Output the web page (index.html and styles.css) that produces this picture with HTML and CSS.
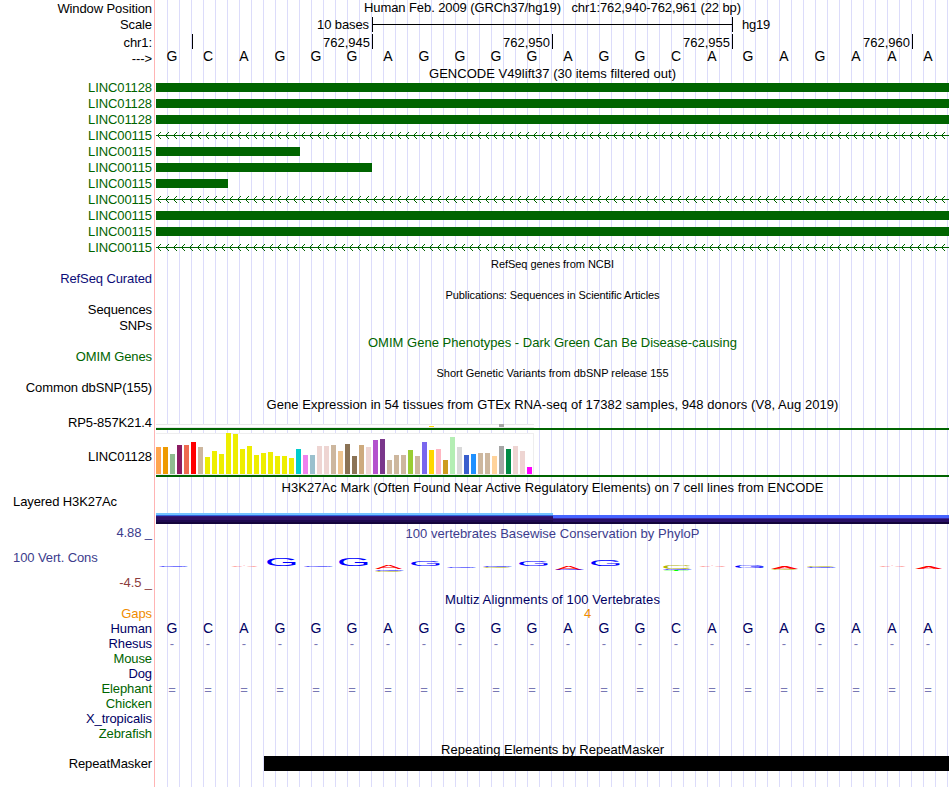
FILE: index.html
```html
<!DOCTYPE html>
<html lang="en">

<head>
    <meta charset="UTF-8">
    <meta name="viewport" content="width=device-width, initial-scale=1.0">
    <title>Genome Browser hg19 chr1:762,940-762,961</title>
    <link rel="stylesheet" href="styles.css">
</head>

<body>
    <main class="browser">
        <!-- position, scale and ruler -->
        <div class="row header-row">
            <div class="label">Window Position</div>
            <div class="data title position-title"><span data-w="377">Human Feb. 2009 (GRCh37/hg19) &nbsp; chr1:762,940-762,961 (22 bp)</span></div>
        </div>
        <div class="row header-row scale-row">
            <div class="label">Scale</div>
            <div class="data scale">
                <span class="scale-size" data-w="52">10 bases</span>
                <span class="scale-bar"></span>
                <span data-w="28">hg19</span>
            </div>
        </div>
        <div class="row ruler-row">
            <div class="label">chr1:</div>
            <div class="data ruler">
                <span class="tick tick-first"></span>
                <span class="tick">762,945</span>
                <span class="tick">762,950</span>
                <span class="tick">762,955</span>
                <span class="tick">762,960</span>
            </div>
        </div>
        <div class="row sequence-row">
            <div class="label arrow-label">---&gt;</div>
            <div class="data bases" data-seq="GCAGGGAGGGGAGGCAGAGAAA"></div>
        </div>

        <!-- GENCODE -->
        <div class="row gencode-title">
            <div class="data title"><span data-w="247">GENCODE V49lift37 (30 items filtered out)</span></div>
        </div>
        <div class="genes" id="genes"></div>

        <div class="row title-row small"><div class="data title"><span data-w="123">RefSeq genes from NCBI</span></div></div>
        <div class="row label-row refseq"><div class="label navy">RefSeq Curated</div></div>
        <div class="row title-row small"><div class="data title"><span data-w="214">Publications: Sequences in Scientific Articles</span></div></div>
        <div class="row label-row pubs"><div class="label">Sequences</div></div>
        <div class="row label-row snps"><div class="label">SNPs</div></div>
        <div class="row title-row omim-title"><div class="data title green"><span data-w="369">OMIM Gene Phenotypes - Dark Green Can Be Disease-causing</span></div></div>
        <div class="row label-row omim"><div class="label green">OMIM Genes</div></div>
        <div class="row title-row small dbsnp-title"><div class="data title"><span data-w="232">Short Genetic Variants from dbSNP release 155</span></div></div>
        <div class="row label-row dbsnp"><div class="label">Common dbSNP(155)</div></div>

        <!-- GTEx -->
        <div class="row title-row"><div class="data title"><span data-w="572">Gene Expression in 54 tissues from GTEx RNA-seq of 17382 samples, 948 donors (V8, Aug 2019)</span></div></div>
        <div class="row gtex-low">
            <div class="label">RP5-857K21.4</div>
            <div class="data gtex-track">
                <svg class="gtex-box" width="378" height="4" viewBox="0 0 378 4">
                    <path class="box-line" d="M0 .5H378M0 3.5H378" />
                    <rect x="273" y="2" width="5" height="1" fill="#ffd700" />
                    <rect x="343" y="0" width="5" height="3" fill="#a6a6a6" />
                </svg>
            </div>
        </div>
        <div class="row gtex-high">
            <div class="label">LINC01128</div>
            <div class="data gtex-track">
                <div class="gtex-bars" id="gtex"></div>
            </div>
        </div>

        <!-- H3K27Ac -->
        <div class="row title-row h3k-title"><div class="data title"><span data-w="542">H3K27Ac Mark (Often Found Near Active Regulatory Elements) on 7 cell lines from ENCODE</span></div></div>
        <div class="row h3k">
            <div class="label label-left">Layered H3K27Ac</div>
            <div class="data signal"><span class="signal-high"></span><span class="signal-low"></span></div>
        </div>

        <!-- conservation -->
        <div class="row phylop">
            <div class="label phylop-labels">
                <span class="blue">4.88 _</span>
                <span class="blue label-left">100 Vert. Cons</span>
                <span class="maroon">-4.5 _</span>
            </div>
            <div class="data">
                <div class="title blue"><span data-w="294">100 vertebrates Basewise Conservation by PhyloP</span></div>
                <svg id="logo" class="logo" width="793" height="30" viewBox="156 550 793 30"></svg>
            </div>
        </div>
        <div class="row title-row multiz-title"><div class="data title navy-dark"><span data-w="215">Multiz Alignments of 100 Vertebrates</span></div></div>
        <div class="row align-row gaps"><div class="label orange">Gaps</div><div class="data gap-count">4</div></div>
        <div class="row align-row"><div class="label navy-dark">Human</div><div class="data bases navy-dark" data-seq="GCAGGGAGGGGAGGCAGAGAAA"></div></div>
        <div class="row align-row"><div class="label navy-dark">Rhesus</div><div class="data bases faded" data-seq="----------------------"></div></div>
        <div class="row align-row"><div class="label green">Mouse</div></div>
        <div class="row align-row"><div class="label navy-dark">Dog</div></div>
        <div class="row align-row"><div class="label green">Elephant</div><div class="data bases faded equals" data-seq="======================"></div></div>
        <div class="row align-row"><div class="label green">Chicken</div></div>
        <div class="row align-row"><div class="label navy-dark">X_tropicalis</div></div>
        <div class="row align-row"><div class="label green">Zebrafish</div></div>

        <!-- repeats -->
        <div class="row title-row repeat-title"><div class="data title"><span data-w="223">Repeating Elements by RepeatMasker</span></div></div>
        <div class="row repeats">
            <div class="label">RepeatMasker</div>
            <div class="data"><div class="repeat-bar"></div></div>
        </div>
    </main>
    <script src="script.js"></script>
</body>

</html>
```
FILE: styles.css
```css
* {
    box-sizing: border-box;
    margin: 0;
    padding: 0;
}

body {
    background-color: #fff;
    color: #000;
    font-family: "Liberation Sans", Arial, Helvetica, sans-serif;
    font-size: 13px;
    line-height: 16px;
}

.browser {
    width: 950px;
    height: 787px;
    overflow: hidden;
    /* red divider, then a guide line every third of a base */
    background:
        linear-gradient(#ffb4b4, #ffb4b4) 154px 0 / 1px 100% no-repeat,
        repeating-linear-gradient(to right, #dcdcfa 0, #dcdcfa 1px, transparent 1px, transparent 12px) 167px 0 / 783px 100% no-repeat;
}

.row {
    display: grid;
    grid-template-columns: 152px 793px;
    grid-template-rows: minmax(0, 1fr);
    column-gap: 4px;
}

.label {
    grid-column: 1;
    text-align: right;
    white-space: nowrap;
    letter-spacing: -0.1px;
}

.label-left {
    text-align: left;
    padding-left: 13px;
}

.data {
    grid-column: 2;
    white-space: nowrap;
}

.title {
    text-align: center;
}

.green { color: #006400; }
.navy { color: #0c0c78; }
.navy-dark { color: #000064; }
.blue { color: #3c3c8c; }
.maroon { color: #8c3c3c; }
.orange { color: #f08c00; }

/* header */
.header-row {
    height: 17px;
    line-height: 17px;
}

.scale-row {
    line-height: 15px;
}

.position-title {
    line-height: 15px;
}

.scale {
    display: flex;
}

.scale-size {
    width: 213px;
    text-align: right;
}

.scale-bar {
    width: 361px;
    height: 15px;
    margin: 0 9px 0 3px;
    border: solid #000;
    border-width: 0 1px;
    background: linear-gradient(#000, #000) 0 7px / 100% 1px no-repeat;
}

.ruler-row {
    height: 16px;
    line-height: 17px;
}

.ruler {
    display: flex;
}

.tick {
    width: 180px;
    height: 15px;
    padding-right: 2px;
    border-right: 1px solid #000;
    text-align: right;
}

.tick-first {
    width: 37px;
}

.sequence-row {
    height: 16px;
    line-height: 13px;
}

.arrow-label {
    line-height: 17px;
}

.bases {
    display: grid;
    grid-template-columns: repeat(22, 36px);
    text-align: center;
    font-size: 14px;
    margin-left: -2px;
}

/* gene items */
.gencode-title {
    height: 14px;
    line-height: 15px;
}

.gene {
    height: 16px;
    color: #006400;
}

.exon {
    height: 9px;
    margin-top: 3px;
    background-color: #006400;
}

.intron {
    display: block;
    margin-top: 4px;
}

/* titles and dense labels */
.title-row {
    height: 16px;
}

.small {
    height: 18px;
    font-size: 11px;
    line-height: 17px;
}

.label-row {
    height: 13px;
    line-height: 10px;
}

.pubs {
    height: 14px;
}

.snps {
    height: 17px;
    line-height: 13px;
}

.omim-title {
    line-height: 14px;
}

.omim {
    height: 15px;
    line-height: 10px;
}

.dbsnp-title {
    height: 14px;
    line-height: 13px;
}

.dbsnp {
    height: 16px;
    line-height: 14px;
}

/* expression */
.gtex-low {
    height: 17px;
    line-height: 19px;
}

.gtex-track {
    display: flex;
    flex-direction: column;
    justify-content: flex-end;
    border-bottom: 2px solid #006400;
}

.gtex-box {
    display: block;
    background-color: #fff;
}

.box-line {
    stroke: #e8e8e8;
    fill: none;
}

.gtex-high {
    height: 47px;
    line-height: 53px;
}

.gtex-bars {
    display: flex;
    align-items: flex-end;
    gap: 2px;
    width: 378px;
    height: 42px;
    background-color: #fff;
    border: solid #eee;
    border-width: 1px 1px 1px 0;
}

.gtex-bars i {
    width: 5px;
    flex: none;
}

/* histone marks */
.h3k-title {
    height: 18px;
    line-height: 21px;
}

.h3k {
    height: 29px;
    line-height: 14px;
}

.signal {
    display: flex;
    align-items: flex-end;
}

.signal-high {
    width: 397px;
    height: 11px;
    background: linear-gradient(#73c3ff 0 2px, #3264dc 2px 3px, #321478 3px 4px, #2d0f64 4px 7px, #1e0a50 7px 9px, #14053c 9px);
}

.signal-low {
    flex: 1;
    height: 9px;
    background: linear-gradient(#4664ff 0 3px, #3c28a0 3px 4px, #280f64 4px 7px, #14053c 7px);
}

/* conservation */
.phylop {
    height: 68px;
}

.phylop .title {
    height: 26px;
    line-height: 20px;
}

.phylop-labels {
    display: flex;
    flex-direction: column;
    justify-content: space-between;
    height: 67px;
    padding-top: 1px;
}

.logo {
    display: block;
    font-size: 40px;
}

.multiz-title {
    height: 15px;
}

.align-row {
    height: 15px;
    line-height: 15px;
}

.gaps {
    height: 14px;
    line-height: 14px;
}

.gap-count {
    padding-left: 428px;
    color: #f08c00;
}

.faded {
    color: #7878b4;
    font-size: 13px;
}

.equals {
    line-height: 17px;
}

.repeat-title {
    height: 15px;
    line-height: 17px;
}

.repeats {
    height: 16px;
}

.repeat-bar {
    height: 15px;
    margin-left: 108px;
    background-color: #000;
}
```
FILE: script.js
```js
// bases, one cell each
document.querySelectorAll('.bases').forEach((row) => {
    row.innerHTML = row.dataset.seq.split('').map(b => `<span>${b}</span>`).join('');
});

// gene items: width of the exon, 0 for an intron
const genes = [
    ['LINC01128', 793], ['LINC01128', 793], ['LINC01128', 793],
    ['LINC00115', 0], ['LINC00115', 144], ['LINC00115', 216], ['LINC00115', 72],
    ['LINC00115', 0], ['LINC00115', 793], ['LINC00115', 793], ['LINC00115', 0]
];

function intron() {
    let d = 'M0 3h793v1H0z';
    // arrow heads, one pixel per step away from the line
    for (let x = 1; x < 790; x += 8) {
        for (let i = 1; i <= 3; i++) {
            d += `M${x + i} ${3 - i}h1v1h-1zM${x + i} ${3 + i}h1v1h-1z`;
        }
    }
    return `<svg class="intron" width="793" height="7"><path d="${d}" fill="#006400" shape-rendering="crispEdges"/></svg>`;
}

document.getElementById('genes').innerHTML = genes.map(([name, width]) => `
    <div class="row gene">
        <div class="label">${name}</div>
        <div class="data">${width ? `<div class="exon" style="width: ${width}px"></div>` : intron()}</div>
    </div>`).join('');

// expression per tissue
const tissues = [
    [27, '#ffa54f'], [27, '#ee9a00'], [20, '#8fbc8f'], [29, '#8b1c62'], [29, '#ee6a50'], [32, '#ff0000'],
    [27, '#cdb79e'], [17, '#eeee00'], [23, '#eeee00'], [20, '#eeee00'], [41, '#eeee00'], [40, '#eeee00'],
    [25, '#eeee00'], [28, '#eeee00'], [19, '#eeee00'], [21, '#eeee00'], [22, '#eeee00'], [18, '#eeee00'],
    [18, '#eeee00'], [16, '#eeee00'], [25, '#00cdcd'], [19, '#ee82ee'], [19, '#9ac0cd'], [28, '#eed5d2'],
    [28, '#eed5d2'], [29, '#cdb79e'], [23, '#eec591'], [30, '#8b7355'], [18, '#8b7355'], [29, '#cdaa7d'],
    [27, '#eed5d2'], [34, '#b452cd'], [35, '#7a378b'], [14, '#cdb79e'], [19, '#cdb79e'], [19, '#cdb79e'],
    [24, '#9acd32'], [18, '#cdb79e'], [32, '#7a67ee'], [24, '#ffd700'], [25, '#ffb6c1'], [14, '#cd9b1d'],
    [37, '#b4eeb4'], [27, '#d9d9d9'], [19, '#3a5fcd'], [20, '#1e90ff'], [21, '#cdb79e'], [21, '#cdb79e'],
    [18, '#ffd39b'], [28, '#a6a6a6'], [25, '#008b45'], [28, '#eed5d2'], [23, '#eed5d2'], [7, '#ff00ff']
];
document.getElementById('gtex').innerHTML = tissues
    .map(([h, color]) => `<i style="height: ${h}px; background: ${color}"></i>`).join('');

// conservation logo: base, left, top, height
const logo = [
    ['G', 157, 566, 1], ['A', 231, 566, 1], ['G', 265, 558.7, 7.5], ['G', 302, 566, 1], ['G', 337, 558.7, 7.5],
    ['A', 375, 566, 3.2], ['G', 373, 568.7, 1.8], ['C', 373, 570.5, 1],
    ['G', 409, 561.6, 4.6], ['G', 445, 566, 1.6], ['G', 481, 566, 1.3], ['C', 481, 567.3, 1],
    ['G', 517, 561.6, 4.6], ['A', 555, 566, 4], ['G', 553, 569.6, 0.8], ['G', 589, 559.8, 6.4],
    ['C', 661, 565.7, 3.2], ['G', 661, 568.8, 1], ['T', 663, 569.8, 0.9],
    ['A', 699, 566, 1], ['G', 733, 566, 2], ['A', 771, 566, 3], ['C', 769, 568.8, 1],
    ['C', 805, 565.8, 1.2], ['G', 805, 567, 1], ['A', 879, 566, 1], ['A', 915, 566, 3]
];
const colors = { G: '#0000ff', A: '#ff0000', C: '#b4b400', T: '#00ff00' };
const svg = document.getElementById('logo');
svg.innerHTML = logo.map(([b, x, y, h]) =>
    `<text transform="translate(${x} ${y + h}) scale(${b === 'A' ? 1.02 : 1.08} ${h / 28.5})" fill="${colors[b]}">${b}</text>`).join('');

document.querySelectorAll('[data-w]').forEach((el) => {
    const range = document.createRange();
    range.selectNodeContents(el);
    const spare = el.dataset.w - range.getBoundingClientRect().width;
    el.style.letterSpacing = spare / el.textContent.length + 'px';
});
```
